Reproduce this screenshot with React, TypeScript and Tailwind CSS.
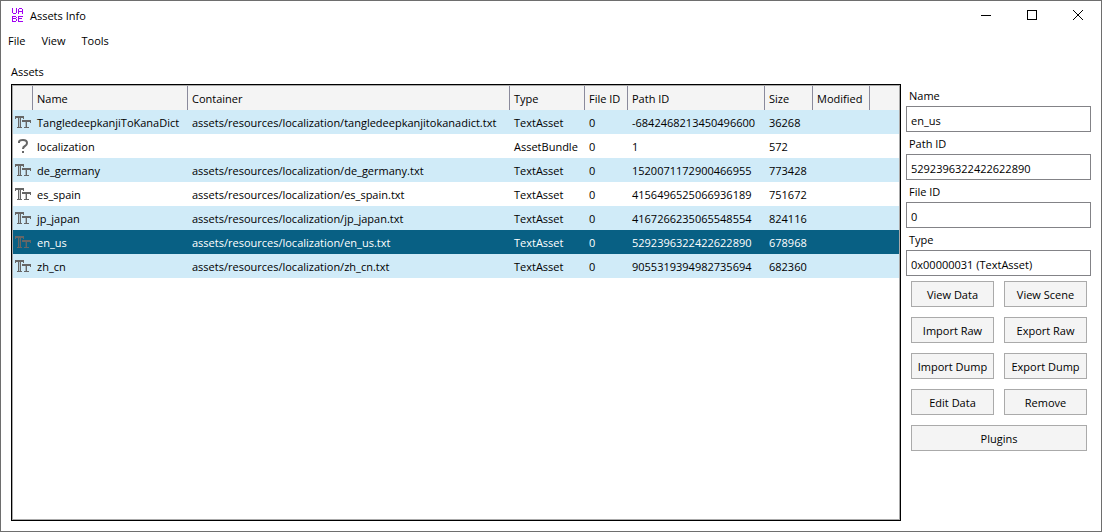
import { useState } from 'react'

interface Asset {
  name: string
  container: string
  type: string
  fileId: number
  pathId: string
  size: number
}

const assets: Asset[] = [
  { name: 'TangledeepkanjiToKanaDict', container: 'assets/resources/localization/tangledeepkanjitokanadict.txt', type: 'TextAsset', fileId: 0, pathId: '-6842468213450496600', size: 36268 },
  { name: 'localization', container: '', type: 'AssetBundle', fileId: 0, pathId: '1', size: 572 },
  { name: 'de_germany', container: 'assets/resources/localization/de_germany.txt', type: 'TextAsset', fileId: 0, pathId: '1520071172900466955', size: 773428 },
  { name: 'es_spain', container: 'assets/resources/localization/es_spain.txt', type: 'TextAsset', fileId: 0, pathId: '4156496525066936189', size: 751672 },
  { name: 'jp_japan', container: 'assets/resources/localization/jp_japan.txt', type: 'TextAsset', fileId: 0, pathId: '4167266235065548554', size: 824116 },
  { name: 'en_us', container: 'assets/resources/localization/en_us.txt', type: 'TextAsset', fileId: 0, pathId: '5292396322422622890', size: 678968 },
  { name: 'zh_cn', container: 'assets/resources/localization/zh_cn.txt', type: 'TextAsset', fileId: 0, pathId: '9055319394982735694', size: 682360 },
]

const typeIds: Record<string, string> = {
  TextAsset: '0x00000031',
  AssetBundle: '0x0000008E',
}

const headers = ['Name', 'Container', 'Type', 'File ID', 'Path ID', 'Size', 'Modified']

const actions = [
  'View Data',
  'View Scene',
  'Import Raw',
  'Export Raw',
  'Import Dump',
  'Export Dump',
  'Edit Data',
  'Remove',
]

function AppLogo() {
  return (
    <svg width="11" height="14" viewBox="0 0 11 14" fill="none" stroke="#a100f2" shapeRendering="crispEdges" aria-hidden="true">
      <path d="M.5 0v5M1 5.5h3M4.5 0v5" />
      <path d="M6.5 1v5M7 .5h3M10.5 1v5M7 3.5h3" />
      <path d="M.5 8v6M1 8.5h3M1 10.5h3M1 13.5h3M4.5 9v1M4.5 11v2" />
      <path d="M6.5 8v6M7 8.5h4M7 10.5h3M7 13.5h4" />
    </svg>
  )
}

function TextAssetIcon() {
  return (
    <svg width="16" height="12" viewBox="0 0 16 12" fill="#666" shapeRendering="crispEdges" aria-hidden="true">
      <rect x="0" y="0" width="9" height="2" />
      <rect x="0" y="2" width="1" height="1" />
      <rect x="8" y="2" width="1" height="1" />
      <rect x="3" y="2" width="1" height="9" />
      <rect x="4" y="2" width="1" height="9" opacity=".3" />
      <rect x="5" y="2" width="1" height="9" />
      <rect x="2" y="11" width="5" height="1" />
      <rect x="7" y="4" width="9" height="2" />
      <rect x="15" y="6" width="1" height="1" />
      <rect x="10" y="6" width="1" height="5" opacity=".4" />
      <rect x="11" y="6" width="1" height="5" />
      <rect x="9" y="11" width="5" height="1" />
    </svg>
  )
}

function UnknownIcon() {
  return (
    <svg width="16" height="14" viewBox="0 0 16 14" fill="none" stroke="#666" strokeWidth="2" aria-hidden="true">
      <path d="M4 4V3Q4 1 8 1T12 4Q12 6 10 7Q8 8 8 10M8 12v2" />
    </svg>
  )
}

function Field({ id, label, value }: { id: string; label: string; value: string }) {
  return (
    <div>
      <label htmlFor={id} className="block h-[22px] pl-[3px] leading-6">{label}</label>
      <input
        id={id}
        readOnly
        value={value}
        className="block h-[26px] w-full border border-[#838387] bg-white px-1 pt-0.5 outline-none"
      />
    </div>
  )
}

export default function App() {
  const [selected, setSelected] = useState(5)
  const asset = assets[selected]

  return (
    <div className="flex h-screen flex-col border border-[#6e6e6e] bg-white font-['Open_Sans',sans-serif] text-[11px] leading-4 text-black">
      <header className="flex h-7 items-center pl-[11px]">
        <AppLogo />
        <h1 className="flex-1 pt-0.5 pl-[7px]">Assets Info</h1>
        <button aria-label="Minimize" className="flex h-full w-[46px] items-center justify-center">
          <svg width="10" height="10" stroke="#000" shapeRendering="crispEdges"><path d="M0 5.5h10" /></svg>
        </button>
        <button aria-label="Maximize" className="flex h-full w-[46px] items-center justify-center">
          <svg width="10" height="10" fill="none" stroke="#000" shapeRendering="crispEdges"><path d="M.5.5h9v9h-9z" /></svg>
        </button>
        <button aria-label="Close" className="flex h-full w-[46px] items-center justify-center">
          <svg width="10" height="10" stroke="#000"><path d="M0 0l10 10M10 0L0 10" /></svg>
        </button>
      </header>

      <nav className="flex h-6 items-center gap-4 pl-[7px]">
        <button>File</button>
        <button>View</button>
        <button>Tools</button>
      </nav>

      <div className="flex min-h-0 flex-1 gap-[5px] px-2.5 pb-2.5">
        <section className="flex min-w-0 flex-1 flex-col">
          <h2 className="h-[31px] pt-[11px]">Assets</h2>
          <div className="flex-1 overflow-hidden border border-black">
            <div className="h-full overflow-hidden border border-[#aaa]">
              <table className="w-full table-fixed border-collapse whitespace-nowrap">
                <colgroup>
                  <col className="w-5" />
                  <col className="w-[155px]" />
                  <col className="w-[322px]" />
                  <col className="w-[75px]" />
                  <col className="w-[43px]" />
                  <col className="w-[137px]" />
                  <col className="w-12" />
                  <col className="w-[57px]" />
                  <col />
                </colgroup>
                <thead>
                  <tr className="h-6 bg-[#f4f4f4] text-left">
                    <th className="p-0 shadow-[inset_-1px_0_#8a8a9c]" />
                    {headers.map(h => (
                      <th key={h} className="p-0 pt-0.5 pl-1 font-normal shadow-[inset_-1px_0_#8a8a9c]">{h}</th>
                    ))}
                    <th className="p-0" />
                  </tr>
                </thead>
                <tbody>
                  {assets.map((a, i) => (
                    <tr
                      key={a.pathId}
                      onClick={() => setSelected(i)}
                      className={i === selected ? 'h-6 bg-[#086084] text-white' : 'h-6 odd:bg-[#d0ebf8]'}
                    >
                      <td className="p-0 pl-0.5">{a.type === 'TextAsset' ? <TextAssetIcon /> : <UnknownIcon />}</td>
                      <td className="p-0 pt-0.5 pl-1">{a.name}</td>
                      <td className="p-0 pt-0.5 pl-1">{a.container}</td>
                      <td className="p-0 pt-0.5 pl-1">{a.type}</td>
                      <td className="p-0 pt-0.5 pl-1">{a.fileId}</td>
                      <td className="p-0 pt-0.5 pl-1">{a.pathId}</td>
                      <td className="p-0 pt-0.5 pl-1">{a.size}</td>
                      <td className="p-0" />
                      <td className="p-0" />
                    </tr>
                  ))}
                </tbody>
              </table>
            </div>
          </div>
        </section>

        <aside className="w-[185px] pt-[31px]">
          <Field id="name" label="Name" value={asset.name} />
          <Field id="path-id" label="Path ID" value={asset.pathId} />
          <Field id="file-id" label="File ID" value={String(asset.fileId)} />
          <Field id="type" label="Type" value={`${typeIds[asset.type]} (${asset.type})`} />
          <div className="grid grid-cols-2 gap-2.5 pt-[5px] pr-1 pl-[5px]">
            {actions.map(action => (
              <button key={action} className="h-[26px] border border-[#aaa] bg-[#f4f4f4] pt-0.5 whitespace-nowrap">{action}</button>
            ))}
            <button className="col-span-2 h-[26px] border border-[#aaa] bg-[#f4f4f4] pt-0.5">Plugins</button>
          </div>
        </aside>
      </div>
    </div>
  )
}
